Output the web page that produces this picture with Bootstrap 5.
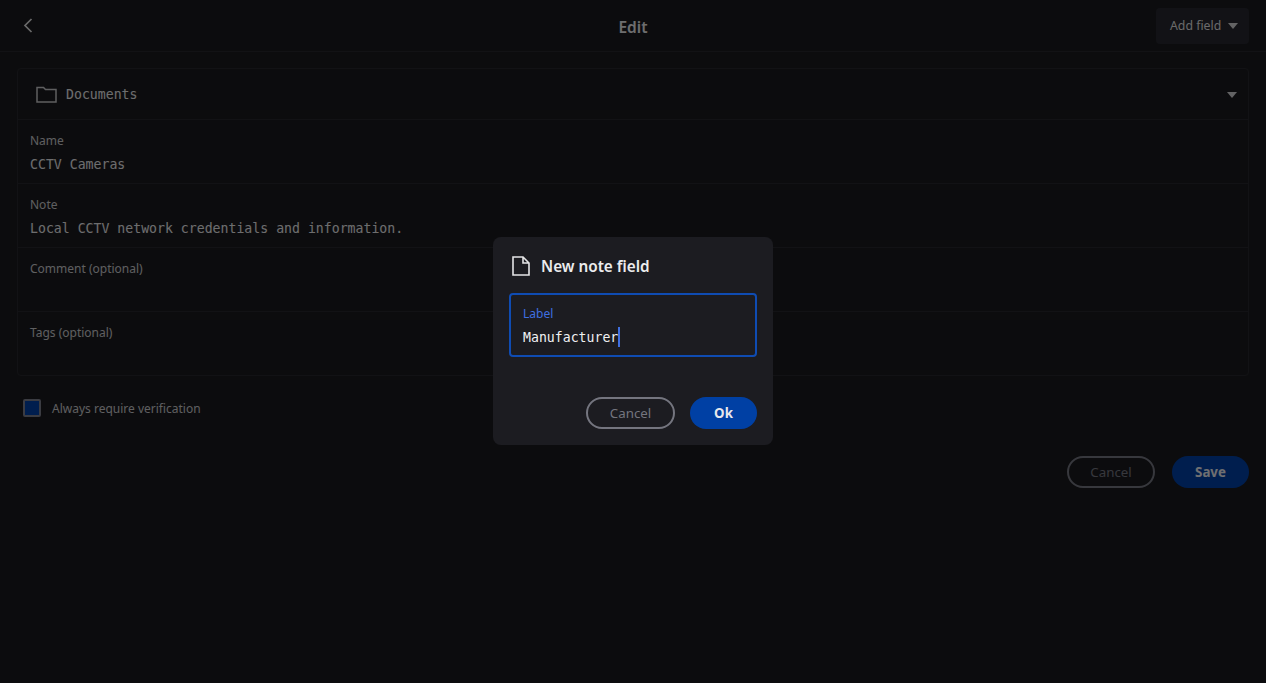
<!DOCTYPE html>
<html lang="en">
<head>
  <meta charset="UTF-8">
  <title>Edit</title>
  <link href="https://cdn.jsdelivr.net/npm/bootstrap@5.3.0/dist/css/bootstrap.min.css" rel="stylesheet">
  <style>
    body { background: #1b1b1f; color: #e4e4e6; font-family: "Noto Sans", sans-serif; font-size: 13px; height: 683px; overflow: hidden; }
    .top-bar { height: 52px; border-bottom: 1px solid #26272c; padding: 8px 17px 7px 17px; }
    .top-side { width: 94px; }
    .back-link { color: #ddd; }
    .top-title { font-size: 15.5px; font-weight: 600; line-height: 1; margin-top: 3px; }
    .add-btn { width: 93px; height: 36px; background: #26272e; border-radius: 4px; font-size: 12.3px; color: #ddd; padding-left: 14px; gap: 7px; }
    .caret { width: 0; height: 0; border-left: 5.5px solid transparent; border-right: 5.5px solid transparent; border-top: 6px solid #d0d0d2; }
    .edit-wrap { padding: 16px 17px 0 17px; }
    .field-box { border: 1px solid #26272c; border-radius: 4px; }
    .field-row { height: 64px; padding: 12px 12px 0 12px; border-bottom: 1px solid #26272c; }
    .field-row:last-child { border-bottom: 0; height: 63px; }
    .folder-row { height: 51px; padding: 1px 11px 0 18px; border-bottom: 1px solid #26272c; }
    .mono-text { font-family: "DejaVu Sans Mono", monospace; font-size: 13.2px; line-height: 18px; }
    .field-label { font-size: 12px; line-height: 17px; color: #c6c6c9; margin-bottom: 7px; }
    .check-row { padding: 24px 6px 0 6px; height: 56px; gap: 11px; font-size: 12px; color: #c6c6c9; }
    .check-box { width: 18px; height: 18px; margin-top: -1px; border: 2px solid #7c7d8a; border-radius: 2px; background: #0040a4; }
    .action-row { margin-top: 24px; gap: 17px; }
    .pill-btn { height: 32px; border-radius: 16px; font-size: 13.3px; line-height: 1; padding: 2px 0 0 0; }
    .pill-ghost { width: 89px; border: 2px solid #74757f; color: #74757f; background: transparent; }
    .pill-main { width: 78px; background: #0040a4; color: #e8e8ec; font-weight: 700; border: 0; }
    .action-row .pill-ghost { width: 88px; }
    .action-row .pill-main { width: 77px; }
    .dim-layer { background: rgba(0, 0, 0, .52); padding-bottom: 2px; }
    .note-dialog { width: 280px; height: 208px; background: #1c1c21; border-radius: 8px; padding: 16px; }
    .note-head { height: 24px; gap: 11px; margin-top: 2px; padding-left: 3px; font-size: 15.3px; font-weight: 600; color: #ececee; }
    .note-head svg { margin-top: -2px; }
    .label-input { height: 64px; margin-top: 14px; border: 2px solid #0f4cb3; border-radius: 4px; padding: 10px 12px 0 12px; }
    .label-input .field-label { color: #3f6fe0; margin-bottom: 5px; }
    .typed-text { color: #f0f0f2; }
    .text-cursor { display: inline-block; width: 2px; height: 20px; background: #3f6fe0; vertical-align: -5px; }
    .note-actions { margin-top: 40px; gap: 15px; }
    .note-actions .pill-main { width: 67px; }
  </style>
</head>
<body>
  <div class="top-bar d-flex align-items-center justify-content-between">
    <div class="top-side back-link">
      <svg class="d-block" width="22" height="22" viewBox="0 0 22 22" fill="none" stroke="currentColor" stroke-width="1.7"><path d="M14.5 4 L8 10.5 L14.5 17"/></svg>
    </div>
    <div class="top-title">Edit</div>
    <div class="top-side d-flex justify-content-end">
      <div class="add-btn d-flex align-items-center"><span>Add field</span><span class="caret"></span></div>
    </div>
  </div>

  <div class="edit-wrap">
    <div class="field-box">
      <div class="folder-row d-flex align-items-center">
        <svg class="me-2" width="22" height="18" viewBox="0 0 22 18" fill="none" stroke="#c6c6c9" stroke-width="1.5"><path d="M1 1.5 H7.5 L9.5 3.5 H20 V16 H1 Z"/></svg>
        <span class="mono-text flex-grow-1">Documents</span>
        <span class="caret"></span>
      </div>
      <div class="field-row">
        <div class="field-label">Name</div>
        <div class="mono-text">CCTV Cameras</div>
      </div>
      <div class="field-row">
        <div class="field-label">Note</div>
        <div class="mono-text">Local CCTV network credentials and information.</div>
      </div>
      <div class="field-row">
        <div class="field-label">Comment (optional)</div>
      </div>
      <div class="field-row">
        <div class="field-label">Tags (optional)</div>
      </div>
    </div>
    <div class="check-row d-flex align-items-start">
      <span class="check-box"></span>
      <span>Always require verification</span>
    </div>
    <div class="action-row d-flex justify-content-end">
      <button type="button" class="btn pill-btn pill-ghost">Cancel</button>
      <button type="button" class="btn pill-btn pill-main">Save</button>
    </div>
  </div>

  <div class="dim-layer position-fixed top-0 start-0 w-100 h-100 d-flex align-items-center justify-content-center">
    <div class="note-dialog">
      <div class="note-head d-flex align-items-center">
        <svg width="18" height="20" viewBox="0 0 18 20" fill="none" stroke="#e4e4e6" stroke-width="1.6"><path d="M1 1 H11 L17 7 V19 H1 Z M11 1 V7 H17"/></svg>
        <span>New note field</span>
      </div>
      <div class="label-input">
        <div class="field-label">Label</div>
        <div class="mono-text typed-text">Manufacturer<span class="text-cursor"></span></div>
      </div>
      <div class="note-actions d-flex justify-content-end">
        <button type="button" class="btn pill-btn pill-ghost">Cancel</button>
        <button type="button" class="btn pill-btn pill-main">Ok</button>
      </div>
    </div>
  </div>

  <script src="https://cdn.jsdelivr.net/npm/bootstrap@5.3.0/dist/js/bootstrap.bundle.min.js"></script>
</body>
</html>
